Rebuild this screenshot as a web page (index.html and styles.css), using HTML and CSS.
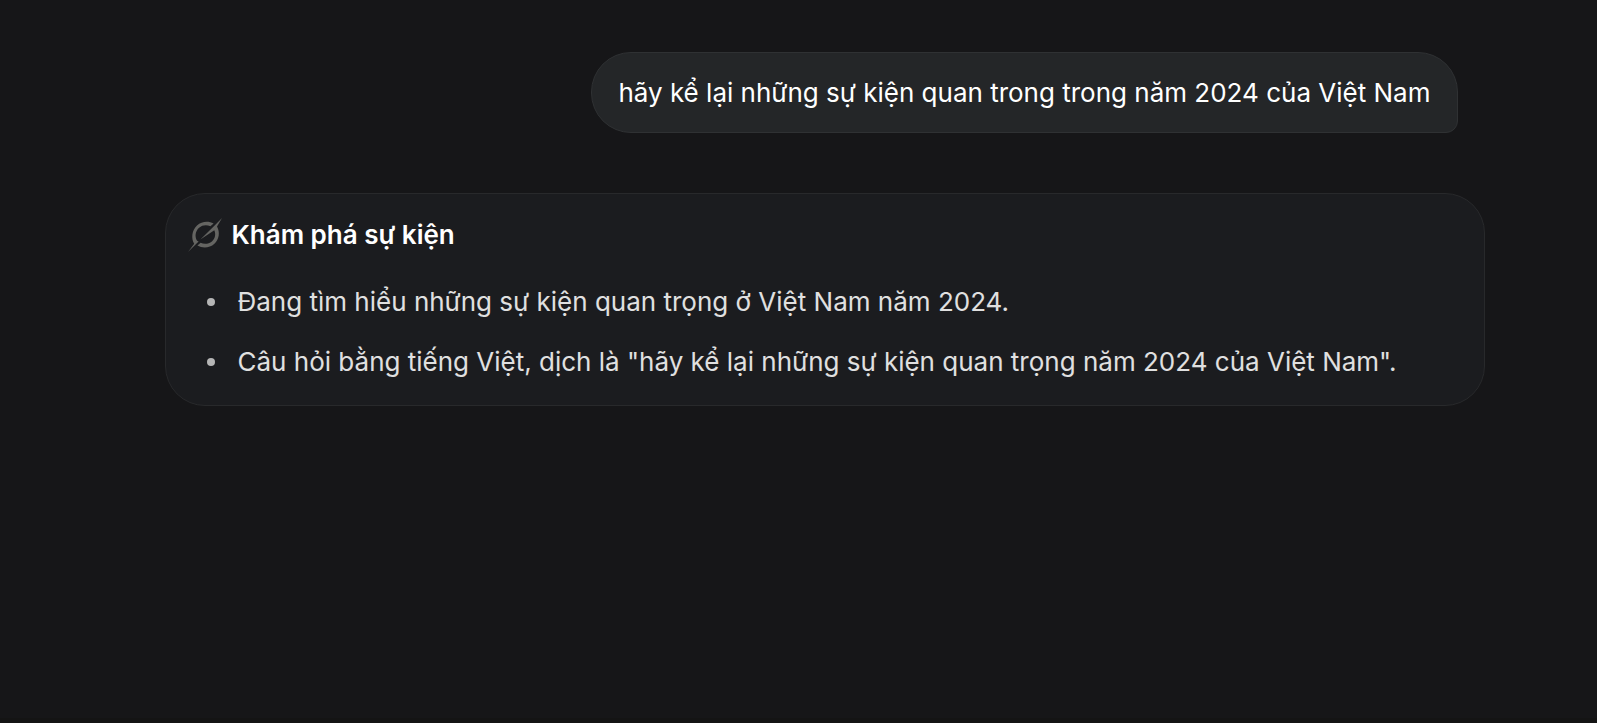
FILE: index.html
```html
<!DOCTYPE html>
<html lang="vi">
<head>
  <meta charset="UTF-8">
  <meta name="viewport" content="width=device-width, initial-scale=1.0">
  <title>Khám phá sự kiện</title>
  <link rel="stylesheet" href="styles.css">
</head>
<body>
  <main class="chat">
    <div class="message">hãy kể lại những sự kiện quan trong trong năm 2024 của Việt Nam</div>

    <section class="thinking">
      <h2 class="thinking-title">
        <svg class="logo" viewBox="0 0 34 34" aria-hidden="true">
          <path d="M6.2 25.8C3 20.5 3.7 12.2 9 7.4C13.6 3.2 20.3 2.5 25.6 5.4L22.4 8.3C18.6 6.6 14.3 7 11.1 9.8C7.2 13.2 6.6 18.6 9.1 22.8L10.6 23.6L0 34Z"/>
          <path d="M12.4 21.6L25.6 8.6L34 0L29 8.6C32.2 14.4 31.2 21.4 26.4 25.8C21.8 30.1 14.8 30.8 9.4 27.6L12.6 24.8C16.2 26.6 20.8 26.1 23.9 23.4C27.2 20.4 28 16.2 26.3 12.2Z"/>
        </svg>
        Khám phá sự kiện
      </h2>
      <ul class="steps">
        <li>Đang tìm hiểu những sự kiện quan trọng ở Việt Nam năm 2024.</li>
        <li>Câu hỏi bằng tiếng Việt, dịch là "hãy kể lại những sự kiện quan trọng năm 2024 của Việt Nam".</li>
      </ul>
    </section>
  </main>
</body>
</html>
```

FILE: styles.css
```css
* {
  box-sizing: border-box;
}
body {
  margin: 0;
  min-height: 100vh;
  background: #161618;
  border-bottom: 5px solid #141414;
  color: #fff;
  font-family: Inter, "Noto Sans", sans-serif;
  font-size: 26px;
  line-height: 40px;
}
.chat {
  display: flex;
  flex-direction: column;
  gap: 60px;
  max-width: 1376px;
  margin: 0 auto;
  padding: 52px 2px 40px 54px;
}
.message {
  align-self: flex-end;
  margin-right: 27px;
  padding: 20px 26px 19px;
  background: #242628;
  border: 1px solid #2f3133;
  border-radius: 40px 40px 12px 40px;
}
.thinking {
  padding: 21px 22px 23px;
  background: #1b1c1f;
  border: 1px solid #28292b;
  border-radius: 40px;
}
.thinking-title {
  display: flex;
  align-items: center;
  gap: 10px;
  margin: 0;
  font-size: 26px;
  font-weight: 600;
}
.logo {
  width: 34px;
  height: 34px;
  fill: #656562;
}
.steps {
  display: flex;
  flex-direction: column;
  gap: 20px;
  margin: 27px 0 0;
  padding: 0;
  list-style: none;
  color: #e0e0e0;
}
.steps li {
  display: flex;
  align-items: center;
  gap: 23px;
  padding-left: 19px;
}
.steps li::before {
  content: "";
  flex: none;
  width: 8px;
  height: 8px;
  border-radius: 50%;
  background: #b5b5b5;
}
```
